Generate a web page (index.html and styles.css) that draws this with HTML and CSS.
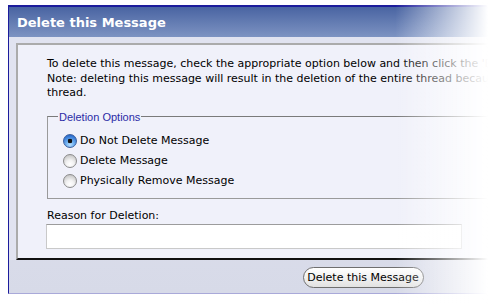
FILE: index.html
```html
<!DOCTYPE html>
<html>
<head>
<meta charset="utf-8">
<link rel="stylesheet" href="styles.css">
</head>
<body>
<div class="window">
  <div class="titlebar">Delete this Message</div>
  <div class="frame">
    <div class="panel">
      <p class="intro">To delete this message, check the appropriate option below and then click the 'Delete this Message' button.<br>Note: deleting this message will result in the deletion of the entire thread because it is the first message in the<br>thread.</p>
      <fieldset class="options">
        <legend class="options-legend">Deletion Options</legend>
        <label class="opt"><input class="radio" type="radio" name="del" checked><span>Do Not Delete Message</span></label>
        <label class="opt"><input class="radio" type="radio" name="del"><span>Delete Message</span></label>
        <label class="opt"><input class="radio" type="radio" name="del"><span>Physically Remove Message</span></label>
      </fieldset>
      <label class="reason-label" for="reason">Reason for Deletion:</label>
      <input class="reason" id="reason" type="text">
    </div>
  </div>
  <div class="footer"><button class="btn" type="button">Delete this Message</button></div>
</div>
<div class="fade"></div>
</body>
</html>
```

FILE: styles.css
```css
html, body {
  margin: 0;
  padding: 0;
  overflow: hidden;
  background: #fff;
}
body {
  font-family: "DejaVu Sans", Verdana, sans-serif;
  font-size: 11px;
  color: #000;
}
.window {
  margin: 5px 0 0 8px;
  width: 708px;
  border-top: 2px solid #1c1c9c;
  border-left: 1px solid #1c1c9c;
  border-bottom: 1px solid #a9a9d9;
  background: linear-gradient(#e2e4f0, #d7dae8);
}
.titlebar {
  height: 30px;
  box-sizing: border-box;
  padding: 2px 0 0 8px;
  line-height: 28px;
  background: linear-gradient(#4964a2, #7d93c2);
  color: #fff;
  font-weight: bold;
  font-size: 13px;
}
.frame {
  padding: 6px 0 0 7px;
  background: #e1e3f0;
}
.panel {
  border-top: 2px solid #ababab;
  border-left: 2px solid #ababab;
  border-bottom: 2px solid #111;
  background: #f0f1fa;
  padding: 12px 29px 9px 29px;
  display: flex;
  flex-direction: column;
  align-items: flex-start;
}
.intro {
  margin: 0;
  line-height: 14.5px;
  white-space: nowrap;
}
.options {
  margin: 10px 0 0 0;
  padding: 11px 0 10px 15px;
  border: 1px solid #9a9a9a;
  border-top-color: #7a7a7a;
  width: 640px;
  display: flex;
  flex-direction: column;
  gap: 6px;
}
.options-legend {
  font-family: "Liberation Sans", Arial, sans-serif;
  font-size: 11px;
  color: #2b2ba6;
  padding: 0 1px;
  margin-left: -5px;
}
.opt {
  display: flex;
  align-items: center;
  height: 14px;
}
.opt span {
  margin-left: 3px;
}
.radio {
  appearance: none;
  -webkit-appearance: none;
  margin: 0;
  width: 14px;
  height: 14px;
  border-radius: 50%;
  border: 1px solid #8b8b8b;
  background: radial-gradient(circle at 50% 75%, #ffffff 0%, #f2f2f2 35%, #c9c9c9 80%, #b0b0b0 100%);
  box-sizing: border-box;
}
.radio:checked {
  border-color: #3a5e9c;
  background:
    radial-gradient(circle at 50% 50%, #111 0, #111 2px, rgba(0,0,0,0) 2.6px),
    radial-gradient(circle at 50% 80%, #b9e0ff 0%, #6fb0f0 35%, #2c6fd0 80%, #1d56b5 100%);
}
.reason-label {
  margin-top: 10px;
  line-height: 13px;
}
.reason {
  margin: 2px 0 0 -1px;
  width: 416px;
  height: 25px;
  box-sizing: border-box;
  border: 1px solid #c9c9c9;
  border-top-color: #9c9c9c;
  background: #fff;
  padding: 0;
}
.footer {
  height: 33px;
  display: flex;
  justify-content: center;
  padding-top: 7px;
  box-sizing: border-box;
}
.btn {
  width: 121px;
  height: 21px;
  border: 1px solid #6f6f6f;
  border-radius: 11px;
  background: linear-gradient(#ffffff, #f1f1f1 50%, #e2e2e2);
  font-family: "DejaVu Sans", Verdana, sans-serif;
  font-size: 11px;
  color: #000;
  padding: 0;
}
.fade {
  position: fixed;
  inset: 0;
  pointer-events: none;
  background: linear-gradient(to right, rgba(255,255,255,0) 395px, #fff 488px);
}
```
